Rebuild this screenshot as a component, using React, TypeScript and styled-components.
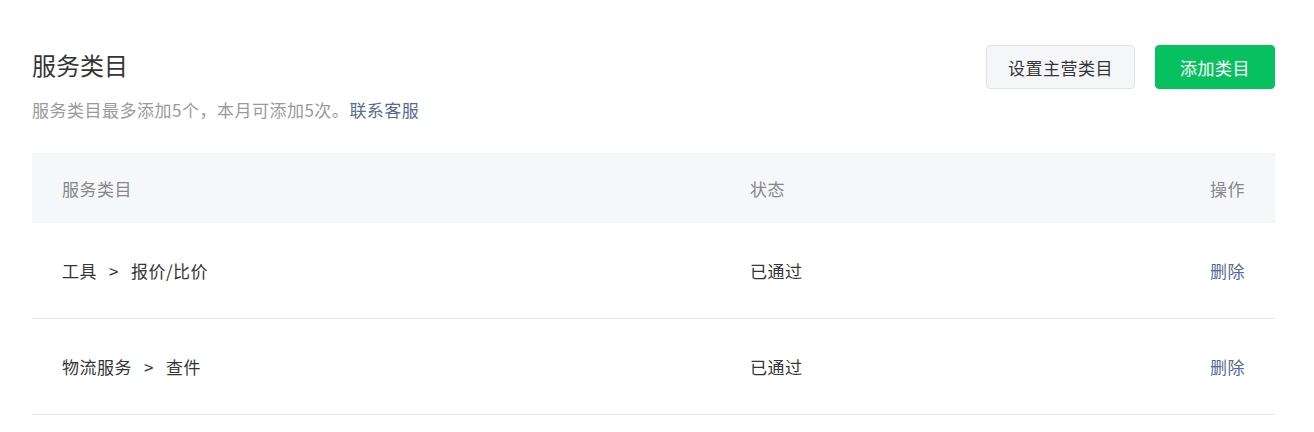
import * as React from 'react';
import styled, { createGlobalStyle } from 'styled-components';

const GlobalStyle = createGlobalStyle`
  body {
    margin: 0;
    background: #fff;
    font-family: "Noto Sans CJK SC", "Noto Sans", sans-serif;
    color: #353535;
  }
`;

const Page = styled.div`
  padding: 45px 39px 0 32px;
`;

const TopBar = styled.div`
  display: flex;
  justify-content: space-between;
  align-items: flex-start;
`;

const TitleBlock = styled.div`
  display: flex;
  flex-direction: column;
  padding-top: 3px;
`;

const Title = styled.h2`
  margin: 0;
  font-size: 24px;
  line-height: 34px;
  font-weight: 400;
  color: #353535;
`;

const Desc = styled.p`
  margin: 16px 0 0;
  font-size: 17px;
  line-height: 24px;
  letter-spacing: 0.5px;
  color: #9a9a9a;
`;

const Link = styled.a`
  color: #576b95;
  text-decoration: none;
  cursor: pointer;
`;

const Actions = styled.div`
  display: flex;
  gap: 20px;
`;

const Btn = styled.button<{ $primary?: boolean }>`
  height: 44px;
  padding: 0 ${(p) => (p.$primary ? '24px' : '21px')};
  border-radius: 4px;
  font-family: inherit;
  font-size: 17px;
  letter-spacing: 0.5px;
  cursor: pointer;
  border: 1px solid ${(p) => (p.$primary ? '#07c160' : '#e0e2e6')};
  background: ${(p) => (p.$primary ? '#07c160' : '#f5f6f8')};
  color: ${(p) => (p.$primary ? '#fff' : '#353535')};
`;

const Table = styled.div`
  margin-top: 31px;
`;

const Row = styled.div<{ $head?: boolean }>`
  display: grid;
  grid-template-columns: 688px 1fr auto;
  align-items: center;
  padding: 0 30px;
  height: ${(p) => (p.$head ? '70px' : '95px')};
  background: ${(p) => (p.$head ? '#f6f7f9' : '#fff')};
  border-bottom: ${(p) => (p.$head ? 'none' : '1px solid #e5e5e5')};
  font-size: 17px;
  letter-spacing: 0.5px;
  color: ${(p) => (p.$head ? '#888888' : '#353535')};
`;

const Crumb = styled.span`
  display: inline-flex;
  gap: 12px;
`;

const DeleteLink = styled(Link)`
  text-align: right;
`;

const HeadRight = styled.span`
  text-align: right;
`;

const rows = [
  { path: ['工具', '报价/比价'], status: '已通过' },
  { path: ['物流服务', '查件'], status: '已通过' },
];

const App: React.FC = () => (
  <Page>
    <GlobalStyle />
    <TopBar>
      <TitleBlock>
        <Title>服务类目</Title>
        <Desc>
          服务类目最多添加5个，本月可添加5次。
          <Link>联系客服</Link>
        </Desc>
      </TitleBlock>
      <Actions>
        <Btn>设置主营类目</Btn>
        <Btn $primary>添加类目</Btn>
      </Actions>
    </TopBar>
    <Table>
      <Row $head>
        <span>服务类目</span>
        <span>状态</span>
        <HeadRight>操作</HeadRight>
      </Row>
      {rows.map((r) => (
        <Row key={r.path.join('>')}>
          <Crumb>
            <span>{r.path[0]}</span>
            <span>&gt;</span>
            <span>{r.path[1]}</span>
          </Crumb>
          <span>{r.status}</span>
          <DeleteLink>删除</DeleteLink>
        </Row>
      ))}
    </Table>
  </Page>
);

export default App;
